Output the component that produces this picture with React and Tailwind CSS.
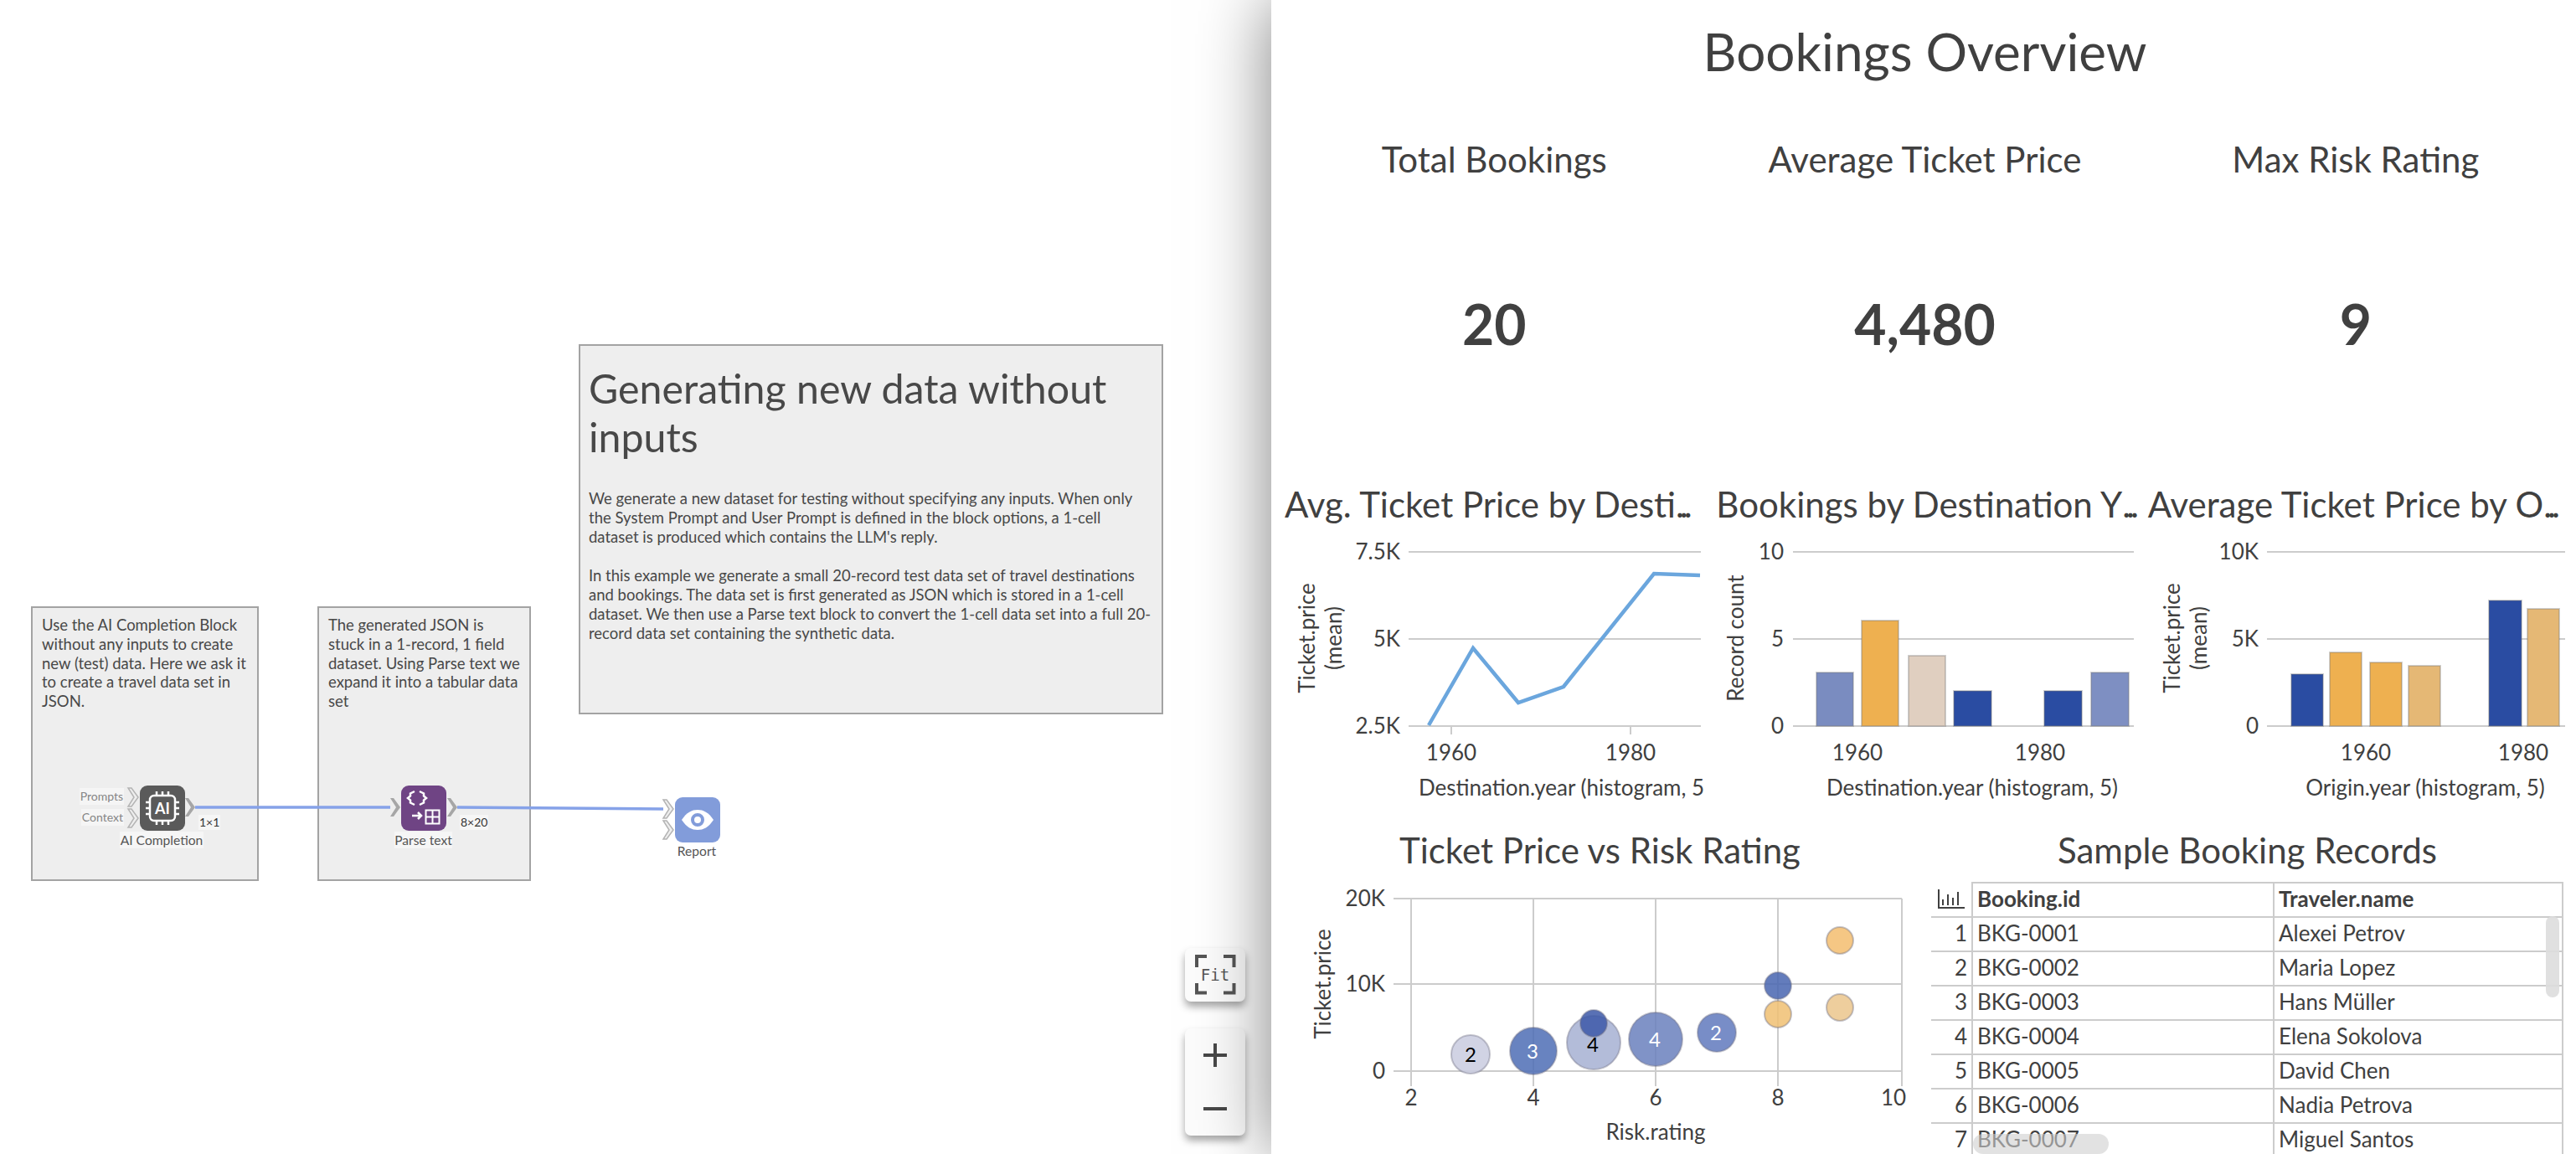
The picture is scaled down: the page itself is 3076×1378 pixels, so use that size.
import React from 'react';

const INK = '#404040';

const notes = [
  {
    cls: 'left-[37px] top-[724px] w-[272px] h-[328px] pl-[11px] pr-2 pt-[9px]',
    text: 'Use the AI Completion Block without any inputs to create new (test) data. Here we ask it to create a travel data set in JSON.',
  },
  {
    cls: 'left-[379px] top-[724px] w-[255px] h-[328px] pl-[11px] pr-[10px] pt-[9px]',
    text: 'The generated JSON is stuck in a 1-record, 1 field dataset. Using Parse text we expand it into a tabular data set',
  },
];

const tableRows = [
  ['BKG-0001', 'Alexei Petrov'],
  ['BKG-0002', 'Maria Lopez'],
  ['BKG-0003', 'Hans Müller'],
  ['BKG-0004', 'Elena Sokolova'],
  ['BKG-0005', 'David Chen'],
  ['BKG-0006', 'Nadia Petrova'],
  ['BKG-0007', 'Miguel Santos'],
];

// Small arrow shaped port next to a block
const Port = ({ x, y, solid }) => (
  <polygon
    points={`${x},${y - 11} ${x + 4},${y - 11} ${x + 12},${y} ${x + 4},${y + 11} ${x},${y + 11} ${x + 7},${y}`}
    fill={solid ? '#a6a6a6' : '#eeeeee'}
    stroke={solid ? 'none' : '#b4b4b4'}
    strokeWidth="1.5"
  />
);

const Canvas = () => (
  <div className="relative flex-1 h-full bg-white overflow-hidden">
    {notes.map((note) => (
      <div
        key={note.text}
        className={`absolute ${note.cls} bg-[#eeeeee] border-2 border-[#a3a3a3] text-[18.5px] leading-[22.8px] text-[#484848]`}
      >
        {note.text}
      </div>
    ))}

    <div className="absolute left-[691px] top-[411px] w-[698px] h-[442px] bg-[#eeeeee] border-2 border-[#a3a3a3] pl-[10px] pr-[12px] pt-[21px] text-[#484848]">
      <div className="text-[48.3px] leading-[58px] mb-[34px]">Generating new data without inputs</div>
      <p className="text-[18.5px] leading-[23px] mb-[23px]">
        We generate a new dataset for testing without specifying any inputs. When only the System Prompt and User Prompt is defined in the block options, a 1-cell dataset is produced which contains the LLM's reply.
      </p>
      <p className="text-[18.5px] leading-[23px]">
        In this example we generate a small 20-record test data set of travel destinations and bookings. The data set is first generated as JSON which is stored in a 1-cell dataset. We then use a Parse text block to convert the 1-cell data set into a full 20-record data set containing the synthetic data.
      </p>
    </div>

    {/* Connections and ports */}
    <svg className="absolute left-0 top-0" width="1000" height="1100">
      <path d="M233 964 L466 964" stroke="#86a2e8" strokeWidth="3.5" fill="none" />
      <path d="M546 964 C640 964 700 966 792 966" stroke="#86a2e8" strokeWidth="3.5" fill="none" />
      <Port x={153} y={952} />
      <Port x={153} y={977} />
      <Port x={221} y={964} solid />
      <Port x={466} y={964} solid />
      <Port x={534} y={964} solid />
      <Port x={792} y={966} />
      <Port x={792} y={991} />
    </svg>

    {/* AI Completion block */}
    <div className="absolute left-[167px] top-[938px] w-[54px] h-[54px] rounded-[9px] bg-[#5a5a5a] flex items-center justify-center">
      <svg width="42" height="42" viewBox="0 0 42 42" fill="none" stroke="#fff" strokeWidth="2.5">
        <rect x="6" y="6" width="30" height="30" rx="5" />
        <path d="M14 1v4M21 1v4M28 1v4M14 37v4M21 37v4M28 37v4M1 14h4M1 21h4M1 28h4M37 14h4M37 21h4M37 28h4" />
        <text x="21" y="27.5" textAnchor="middle" fontSize="18" fontWeight="700" fill="#fff" stroke="none">AI</text>
      </svg>
    </div>
    <div className="absolute right-[calc(100%-148px)] top-[941px] text-[14px] leading-[20px] px-[1px] text-[#858585] bg-[#f5f5f5]">Prompts</div>
    <div className="absolute right-[calc(100%-148px)] top-[966px] text-[14px] leading-[20px] px-[1px] text-[#858585] bg-[#f5f5f5]">Context</div>
    <div className="absolute left-[237px] top-[973px] text-[14px] leading-[18px] px-[1px] text-[#333] bg-[#f6f6f6]">1×1</div>
    <div className="absolute left-[143px] top-[993px] w-[100px] text-center text-[15.6px] leading-[20px] text-[#555] bg-[#f6f6f6]">AI Completion</div>

    {/* Parse text block */}
    <div className="absolute left-[479px] top-[938px] w-[54px] h-[54px] rounded-[9px] bg-[#6f4484]">
      <svg width="54" height="54" viewBox="0 0 54 54" fill="none" stroke="#fff">
        <path d="M16 7l-5 2.500v3L8 15l3 2.500v3L16 23M22 7l5 2.500v3L30 15l-3 2.500v3L22 23" strokeWidth="2.500" />
        <path d="M13 36h11M20 32l4 4-4 4" strokeWidth="2.500" />
        <rect x="29.500" y="29.500" width="16" height="16" strokeWidth="2" />
        <path d="M37.500 29.500v16M29.500 37.500h16" strokeWidth="2" />
      </svg>
    </div>
    <div className="absolute left-[471px] top-[993px] w-[69px] text-center text-[15.6px] leading-[20px] text-[#555] bg-[#f6f6f6]">Parse text</div>
    <div className="absolute left-[549px] top-[973px] text-[14px] leading-[18px] px-[1px] text-[#333] bg-[#f6f6f6]">8×20</div>

    {/* Report block */}
    <div className="absolute left-[806px] top-[952px] w-[54px] h-[54px] rounded-[9px] bg-[#829cda] flex items-center justify-center">
      <svg width="38" height="26" viewBox="0 0 38 26">
        <path d="M0 13C6 4 12 1 19 1s13 3 19 12c-6 9-12 12-19 12S6 22 0 13z" fill="#fff" />
        <circle cx="19" cy="13" r="6" fill="none" stroke="#829cda" strokeWidth="4" />
      </svg>
    </div>
    <div className="absolute left-[802px] top-[1006px] w-[60px] text-center text-[15.6px] leading-[20px] text-[#555]">Report</div>

    {/* Zoom controls */}
    <button className="absolute left-[1415px] top-[1132px] w-[72px] h-[64px] rounded-[7px] bg-[#fcfcfc] shadow-[0_6px_10px_rgba(0,0,0,0.35)] flex items-center justify-center">
      <svg className="absolute inset-0" width="72" height="64" fill="none" stroke="#555" strokeWidth="4">
        <path d="M26 10H14v13M46 10h12.500v13M26 53.500H14V42M46 53.500h12.500V42" />
      </svg>
      <span className="font-['DejaVu_Sans_Mono',monospace] text-[19px] text-[#555]">Fit</span>
    </button>
    <div className="absolute left-[1415px] top-[1228px] w-[72px] h-[128px] rounded-[7px] bg-[#fcfcfc] shadow-[0_6px_10px_rgba(0,0,0,0.35)] flex flex-col">
      <button className="flex-1 flex items-center justify-center">
        <svg width="28" height="28" stroke="#484848" strokeWidth="4"><path d="M0 14h28M14 0v28" /></svg>
      </button>
      <button className="flex-1 flex items-center justify-center">
        <svg width="28" height="28" stroke="#484848" strokeWidth="4"><path d="M0 14h28" /></svg>
      </button>
    </div>
  </div>
);

const Grid = ({ x1, x2, ys }) => ys.map((y) => <line key={y} x1={x1} x2={x2} y1={y} y2={y} stroke="#cccccc" strokeWidth="2" />);

const Label = ({ x, y, anchor = 'middle', children }) => (
  <text x={x} y={y} textAnchor={anchor} fontSize="26" fill={INK}>{children}</text>
);

const YTitle = ({ x, y, lines }) => (
  <text transform={`translate(${x} ${y}) rotate(-90)`} textAnchor="middle" fontSize="26" fill={INK}>
    {lines.map((line, i) => (
      <tspan key={line} x="0" dy={i === 0 ? -(lines.length - 1) * 16 + 9 : 32}>{line}</tspan>
    ))}
  </text>
);

// Plot coordinates are relative to the chart's top left corner, which sits at y=635
const Y_TOP = 24;
const Y_MID = 128;
const Y_BASE = 232;

const ChartFrame = ({ children }) => (
  <svg width="515" height="350" className="block">{children}</svg>
);

const LineChart = () => (
  <ChartFrame>
    <Grid x1={158} x2={507} ys={[Y_TOP, Y_MID, Y_BASE]} />
    <path d="M209 232v10M423 232v10" stroke="#cccccc" strokeWidth="2" />
    <polyline
      points="182,231 235,139 289,204 343,185 451,50 506,52"
      fill="none"
      stroke="#6ba6dd"
      strokeWidth="4.5"
    />
    <Label x={148} y={Y_TOP + 9} anchor="end">7.5K</Label>
    <Label x={148} y={Y_MID + 9} anchor="end">5K</Label>
    <Label x={148} y={Y_BASE + 9} anchor="end">2.5K</Label>
    <Label x={209} y={273}>1960</Label>
    <Label x={423} y={273}>1980</Label>
    <YTitle x={53} y={127} lines={['Ticket.price', '(mean)']} />
    <Label x={170} y={315} anchor="start">Destination.year (histogram, 5</Label>
  </ChartFrame>
);

const Bars = ({ bars }) =>
  bars.map((b) => (
    <rect
      key={b.x}
      x={b.x}
      y={b.top}
      width={b.w}
      height={Y_BASE - b.top}
      fill={b.fill}
      stroke="rgba(120,120,120,0.35)"
      strokeWidth="2"
    />
  ));

const destinationBars = [
  { x: 130, w: 44, top: 168, fill: '#7a8cc0' },
  { x: 184, w: 44, top: 106, fill: '#eeb050' },
  { x: 240, w: 44, top: 148, fill: '#e0cfc0' },
  { x: 294, w: 45, top: 190, fill: '#2a4ca2' },
  { x: 402, w: 45, top: 190, fill: '#2a4ca2' },
  { x: 458, w: 45, top: 168, fill: '#7e8fc2' },
];

const originBars = [
  { x: 181, w: 38, top: 170, fill: '#2a4ca2' },
  { x: 227, w: 38, top: 144, fill: '#eeb050' },
  { x: 275, w: 38, top: 156, fill: '#eeb050' },
  { x: 321, w: 38, top: 160, fill: '#e5b875' },
  { x: 417, w: 39, top: 82, fill: '#2a4ca2' },
  { x: 463, w: 38, top: 92, fill: '#e5b875' },
];

const DestinationChart = () => (
  <ChartFrame>
    <Grid x1={102} x2={509} ys={[Y_TOP, Y_MID, Y_BASE]} />
    <Bars bars={destinationBars} />
    <Label x={91} y={Y_TOP + 9} anchor="end">10</Label>
    <Label x={91} y={Y_MID + 9} anchor="end">5</Label>
    <Label x={91} y={Y_BASE + 9} anchor="end">0</Label>
    <Label x={179} y={273}>1960</Label>
    <Label x={397} y={273}>1980</Label>
    <YTitle x={34} y={127} lines={['Record count']} />
    <Label x={316} y={315}>Destination.year (histogram, 5)</Label>
  </ChartFrame>
);

const OriginChart = () => (
  <ChartFrame>
    <Grid x1={152} x2={508} ys={[Y_TOP, Y_MID, Y_BASE]} />
    <Bars bars={originBars} />
    <Label x={142} y={Y_TOP + 9} anchor="end">10K</Label>
    <Label x={142} y={Y_MID + 9} anchor="end">5K</Label>
    <Label x={142} y={Y_BASE + 9} anchor="end">0</Label>
    <Label x={270} y={273}>1960</Label>
    <Label x={458} y={273}>1980</Label>
    <YTitle x={55} y={127} lines={['Ticket.price', '(mean)']} />
    <Label x={341} y={315}>Origin.year (histogram, 5)</Label>
  </ChartFrame>
);

const bubbles = [
  { cx: 232, cy: 210, r: 23, fill: '#c9cbdf', label: '2', color: '#000', lx: 232, ly: 219 },
  { cx: 307, cy: 206, r: 28, fill: '#4d6db5', label: '3', color: '#fff', lx: 306, ly: 215 },
  { cx: 379, cy: 196, r: 32, fill: '#a6b0d2', label: '4', color: '#000', lx: 378, ly: 207 },
  { cx: 379, cy: 173, r: 16, fill: '#3c58a8', label: '', color: '#fff' },
  { cx: 453, cy: 192, r: 32, fill: '#6a80bd', label: '4', color: '#fff', lx: 452, ly: 201 },
  { cx: 526, cy: 184, r: 23, fill: '#6079bd', label: '2', color: '#fff', lx: 525, ly: 193 },
  { cx: 599, cy: 128, r: 16, fill: '#4865b0', label: '', color: '#fff' },
  { cx: 599, cy: 162, r: 16, fill: '#f0bf72', label: '', color: '#000' },
  { cx: 673, cy: 74, r: 16, fill: '#f3bd6f', label: '', color: '#000' },
  { cx: 673, cy: 154, r: 16, fill: '#ebc68c', label: '', color: '#000' },
];

const ScatterChart = () => (
  <svg width="773" height="329" className="block">
    <Grid x1={140} x2={747} ys={[24, 126, 230]} />
    {[161, 307, 453, 599, 747].map((x) => (
      <line key={x} x1={x} x2={x} y1={24} y2={248} stroke="#cccccc" strokeWidth="2" />
    ))}
    {bubbles.map((b) => (
      <circle key={`${b.cx}-${b.cy}`} cx={b.cx} cy={b.cy} r={b.r} fill={b.fill} fillOpacity="0.85" stroke="rgba(110,110,130,0.4)" strokeWidth="2" />
    ))}
    {bubbles.filter((b) => b.label).map((b) => (
      <text key={`${b.cx}-${b.cy}`} x={b.lx} y={b.ly} textAnchor="middle" fontSize="24" fill={b.color}>{b.label}</text>
    ))}
    <Label x={130} y={33} anchor="end">20K</Label>
    <Label x={130} y={135} anchor="end">10K</Label>
    <Label x={130} y={239} anchor="end">0</Label>
    {[[161, '2'], [307, '4'], [453, '6'], [599, '8'], [737, '10']].map(([x, t]) => (
      <Label key={t} x={x} y={271}>{t}</Label>
    ))}
    <YTitle x={56} y={126} lines={['Ticket.price']} />
    <Label x={453} y={312}>Risk.rating</Label>
  </svg>
);

const BookingsTable = () => (
  <div className="relative ml-[9px] mr-[8px] mt-[4px] overflow-hidden text-[26px] text-[#404040]">
    <table className="table-fixed border-collapse w-[755px]">
      <thead>
        <tr className="h-[41px]">
          <th className="w-[49px] p-0 border-b-2 border-[#cccccc]">
            <svg width="32" height="24" viewBox="0 0 32 24" fill="none" stroke="#404040" strokeWidth="2" className="mx-auto">
              <path d="M1 0v22h31M6 12v7M12 6v13M18 10v9M24 3v16" />
            </svg>
          </th>
          <th className="w-[360px] p-0 pl-[5px] pb-[3px] text-left font-bold leading-none border-2 border-[#cccccc]">Booking.id</th>
          <th className="p-0 pl-[5px] pb-[3px] text-left font-bold leading-none border-2 border-[#cccccc]">Traveler.name</th>
        </tr>
      </thead>
      <tbody>
        {tableRows.map(([id, name], i) => (
          <tr key={id} className="h-[41px]">
            <td className="p-0 pr-[5px] pb-[3px] text-right leading-none border-2 border-l-0 border-[#cccccc]">{i + 1}</td>
            <td className="p-0 pl-[5px] pb-[3px] leading-none border-2 border-[#cccccc]">{id}</td>
            <td className="p-0 pl-[5px] pb-[3px] leading-none border-2 border-[#cccccc]">{name}</td>
          </tr>
        ))}
      </tbody>
    </table>
    {/* Scrollbars lie over the table */}
    <div className="absolute left-[734px] top-[41px] w-[16px] h-[97px] rounded-full bg-[#dddddd]/90" />
    <div className="absolute left-[50px] top-[301px] w-[162px] h-[24px] rounded-full bg-[#cfcfcf]/60" />
  </div>
);

const StatCard = ({ label, value }) => (
  <div className="flex flex-col items-center">
    <div className="h-[134px] flex items-center text-[42px]">{label}</div>
    <div className="h-[258px] flex items-center text-[66px] font-bold">{value}</div>
  </div>
);

const ChartCell = ({ title, children }) => (
  <div className="min-w-0">
    <div className="h-[60px] flex items-center pl-[10px] pb-[5px]">
      <div className="whitespace-nowrap text-[42px] leading-[55px]">
        {title}
        <span className="tracking-[-0.12em]">...</span>
      </div>
    </div>
    {children}
  </div>
);

const Dashboard = () => (
  <div className="relative w-[1558px] h-full shrink-0 bg-white pl-[6px] pr-[6px] overflow-hidden shadow-[0_0_80px_rgba(0,0,0,0.5)] text-[#404040]">
    <div className="h-[123px] pl-[3px] flex items-center justify-center text-[62px]">Bookings Overview</div>
    <div className="grid grid-cols-3 h-[452px] pl-[3px]">
      <StatCard label="Total Bookings" value="20" />
      <StatCard label="Average Ticket Price" value="4,480" />
      <StatCard label="Max Risk Rating" value="9" />
    </div>
    <div className="grid grid-cols-3 h-[410px]">
      <ChartCell title="Avg. Ticket Price by Desti"><LineChart /></ChartCell>
      <ChartCell title="Bookings by Destination Y"><DestinationChart /></ChartCell>
      <ChartCell title="Average Ticket Price by O"><OriginChart /></ChartCell>
    </div>
    <div className="grid grid-cols-2">
      <div>
        <div className="h-[64px] pb-[4px] flex items-center justify-center text-[42px]">Ticket Price vs Risk Rating</div>
        <ScatterChart />
      </div>
      <div>
        <div className="h-[64px] pb-[4px] flex items-center justify-center text-[42px]">Sample Booking Records</div>
        <BookingsTable />
      </div>
    </div>
  </div>
);

const App = () => (
  <div className="flex w-[3076px] h-[1378px] overflow-hidden bg-white font-['Lato',sans-serif]">
    <Canvas />
    <Dashboard />
  </div>
);

export default App;
